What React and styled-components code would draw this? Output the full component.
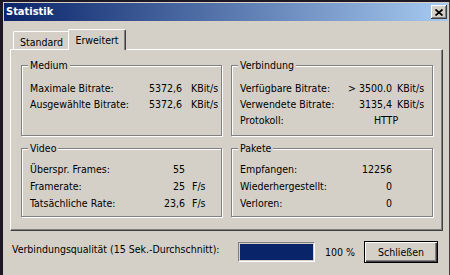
import React from 'react';
import styled, { createGlobalStyle } from 'styled-components';

const Global = createGlobalStyle`
  html, body { margin: 0; padding: 0; background: #1d1824; }
  body {
    width: 450px; height: 275px; overflow: hidden;
    font-family: "DejaVu Sans Condensed", "DejaVu Sans", "Liberation Sans", sans-serif;
    font-size: 10.5px; color: #000;
  }
  #root { width: 450px; height: 275px; }
`;

const Window = styled.div`
  box-sizing: border-box;
  width: 447px;
  height: 273px;
  margin: 2px 0 0 3px;
  padding: 1px 1px 0 1px;
  background: #d4d0c8;
  border-right: 1px solid #404040;
  display: flex;
  flex-direction: column;
`;

const TitleBar = styled.div`
  height: 18px;
  flex: none;
  display: flex;
  align-items: center;
  justify-content: space-between;
  padding: 0 1px 0 2px;
  background: linear-gradient(to right, #0a246a, #a6caf0);
`;

const Title = styled.span`
  color: #fff;
  font-weight: bold;
  font-size: 11px;
  line-height: 14px;
`;

const CloseButton = styled.div`
  box-sizing: border-box;
  width: 16px;
  height: 14px;
  display: flex;
  align-items: center;
  justify-content: center;
  background: #d4d0c8;
  box-shadow: inset -1px -1px #404040, inset 1px 1px #fff, inset -2px -2px #808080;
`;

const Body = styled.div`
  flex: 1;
  display: flex;
  flex-direction: column;
  padding: 8px 5px 0 6px;
`;

const TabStrip = styled.div`
  display: flex;
  align-items: flex-end;
  padding-left: 3px;
`;

const Tab = styled.div`
  box-sizing: border-box;
  width: ${p => p.$w}px;
  height: ${p => (p.$active ? 21 : 18)}px;
  margin-left: ${p => (p.$active ? -2 : 0)}px;
  margin-bottom: ${p => (p.$active ? -1 : 0)}px;
  position: relative;
  z-index: ${p => (p.$active ? 2 : 1)};
  background: #d4d0c8;
  border-top: 1px solid #fff;
  border-left: 1px solid #fff;
  border-right: 1px solid #404040;
  border-radius: 2px 2px 0 0;
  box-shadow: inset -1px 0 #808080;
  display: flex;
  justify-content: center;
  padding-top: 4px;
  line-height: 12px;
`;

const Panel = styled.div`
  box-sizing: border-box;
  height: 182px;
  border-top: 1px solid #fff;
  border-left: 1px solid #fff;
  border-right: 1px solid #404040;
  border-bottom: 1px solid #404040;
  box-shadow: inset -1px -1px #808080;
  padding: 8px 0 0 10px;
  display: grid;
  grid-template-columns: 201px 202px;
  grid-template-rows: 78px 76px;
  column-gap: 9px;
  row-gap: 5px;
`;

const Group = styled.fieldset`
  box-sizing: border-box;
  margin: 0;
  min-width: 0;
  border: 1px solid #808080;
  box-shadow: 1px 1px #fff, inset 1px 1px #fff;
  padding: ${p => p.$pt}px 0 0 8px;
`;

const Legend = styled.legend`
  padding: 0 2px;
  margin-left: -2px;
  line-height: 14px;
  background: #d4d0c8;
`;

const Stats = styled.div`
  display: grid;
  grid-template-columns: ${p => p.$cols};
  grid-auto-rows: ${p => p.$row}px;
  align-items: center;
  white-space: nowrap;
`;

const Label = styled.span``;

const Value = styled.span`
  text-align: right;
`;

const Unit = styled.span`
  padding-left: ${p => p.$gap}px;
`;

const Centered = styled.span`
  grid-column: 2 / 4;
  text-align: center;
`;

const BottomBar = styled.div`
  margin-top: 10px;
  height: 22px;
  display: flex;
  align-items: center;
  padding: 0 5px 0 2px;
`;

const QualityLabel = styled.span`
  flex: 1;
  align-self: flex-start;
  margin-top: 1px;
  line-height: 14px;
`;

const Progress = styled.div`
  box-sizing: border-box;
  width: 77px;
  height: 20px;
  padding: 1px;
  border: 1px solid;
  border-color: #808080 #fff #fff #808080;
  background: #d4d0c8;
  display: flex;
`;

const Fill = styled.div`
  height: 100%;
  background: #0a246a;
`;

const Percent = styled.span`
  width: 32px;
  margin: 0 7px 0 10px;
  white-space: nowrap;
`;

const Button = styled.button`
  box-sizing: border-box;
  width: 74px;
  height: 22px;
  padding: 0;
  border: 1px solid #000;
  background: #d4d0c8;
  box-shadow: inset 1px 1px #fff, inset -1px -1px #404040, inset -2px -2px #808080;
  font-family: inherit;
  font-size: 10.5px;
  color: #000;
`;

export default function App() {
  const quality = 100;
  return (
    <>
      <Global />
      <Window>
        <TitleBar>
          <Title>Statistik</Title>
          <CloseButton>
            <svg width="8" height="7" viewBox="0 0 8 7">
              <path d="M0.5 0.5 L7.5 6.5 M7.5 0.5 L0.5 6.5" stroke="#000" strokeWidth="1.7" fill="none" />
            </svg>
          </CloseButton>
        </TitleBar>
        <Body>
          <TabStrip>
            <Tab $w={57}>Standard</Tab>
            <Tab $w={58} $active>Erweitert</Tab>
          </TabStrip>
          <Panel>
            <Group $pt={8}>
              <Legend>Medium</Legend>
              <Stats $cols="100px 52px auto" $row={16}>
                <Label>Maximale Bitrate:</Label>
                <Value>5372,6</Value>
                <Unit $gap={9}>KBit/s</Unit>
                <Label>Ausgewählte Bitrate:</Label>
                <Value>5372,6</Value>
                <Unit $gap={9}>KBit/s</Unit>
              </Stats>
            </Group>
            <Group $pt={8}>
              <Legend>Verbindung</Legend>
              <Stats $cols="100px 52px auto" $row={16}>
                <Label>Verfügbare Bitrate:</Label>
                <Value>&gt; 3500.0</Value>
                <Unit $gap={5}>KBit/s</Unit>
                <Label>Verwendete Bitrate:</Label>
                <Value>3135,4</Value>
                <Unit $gap={5}>KBit/s</Unit>
                <Label>Protokoll:</Label>
                <Centered>HTTP</Centered>
              </Stats>
            </Group>
            <Group $pt={5}>
              <Legend>Video</Legend>
              <Stats $cols="103px 52px auto" $row={17}>
                <Label>Überspr. Frames:</Label>
                <Value>55</Value>
                <Unit $gap={7}></Unit>
                <Label>Framerate:</Label>
                <Value>25</Value>
                <Unit $gap={7}>F/s</Unit>
                <Label>Tatsächliche Rate:</Label>
                <Value>23,6</Value>
                <Unit $gap={7}>F/s</Unit>
              </Stats>
            </Group>
            <Group $pt={5}>
              <Legend>Pakete</Legend>
              <Stats $cols="100px 52px auto" $row={17}>
                <Label>Empfangen:</Label>
                <Value>12256</Value>
                <Unit $gap={0}></Unit>
                <Label>Wiederhergestellt:</Label>
                <Value>0</Value>
                <Unit $gap={0}></Unit>
                <Label>Verloren:</Label>
                <Value>0</Value>
                <Unit $gap={0}></Unit>
              </Stats>
            </Group>
          </Panel>
          <BottomBar>
            <QualityLabel>Verbindungsqualität (15 Sek.-Durchschnitt):</QualityLabel>
            <Progress>
              <Fill style={{ width: `${quality}%` }} />
            </Progress>
            <Percent>{quality} %</Percent>
            <Button>Schließen</Button>
          </BottomBar>
        </Body>
      </Window>
    </>
  );
}
